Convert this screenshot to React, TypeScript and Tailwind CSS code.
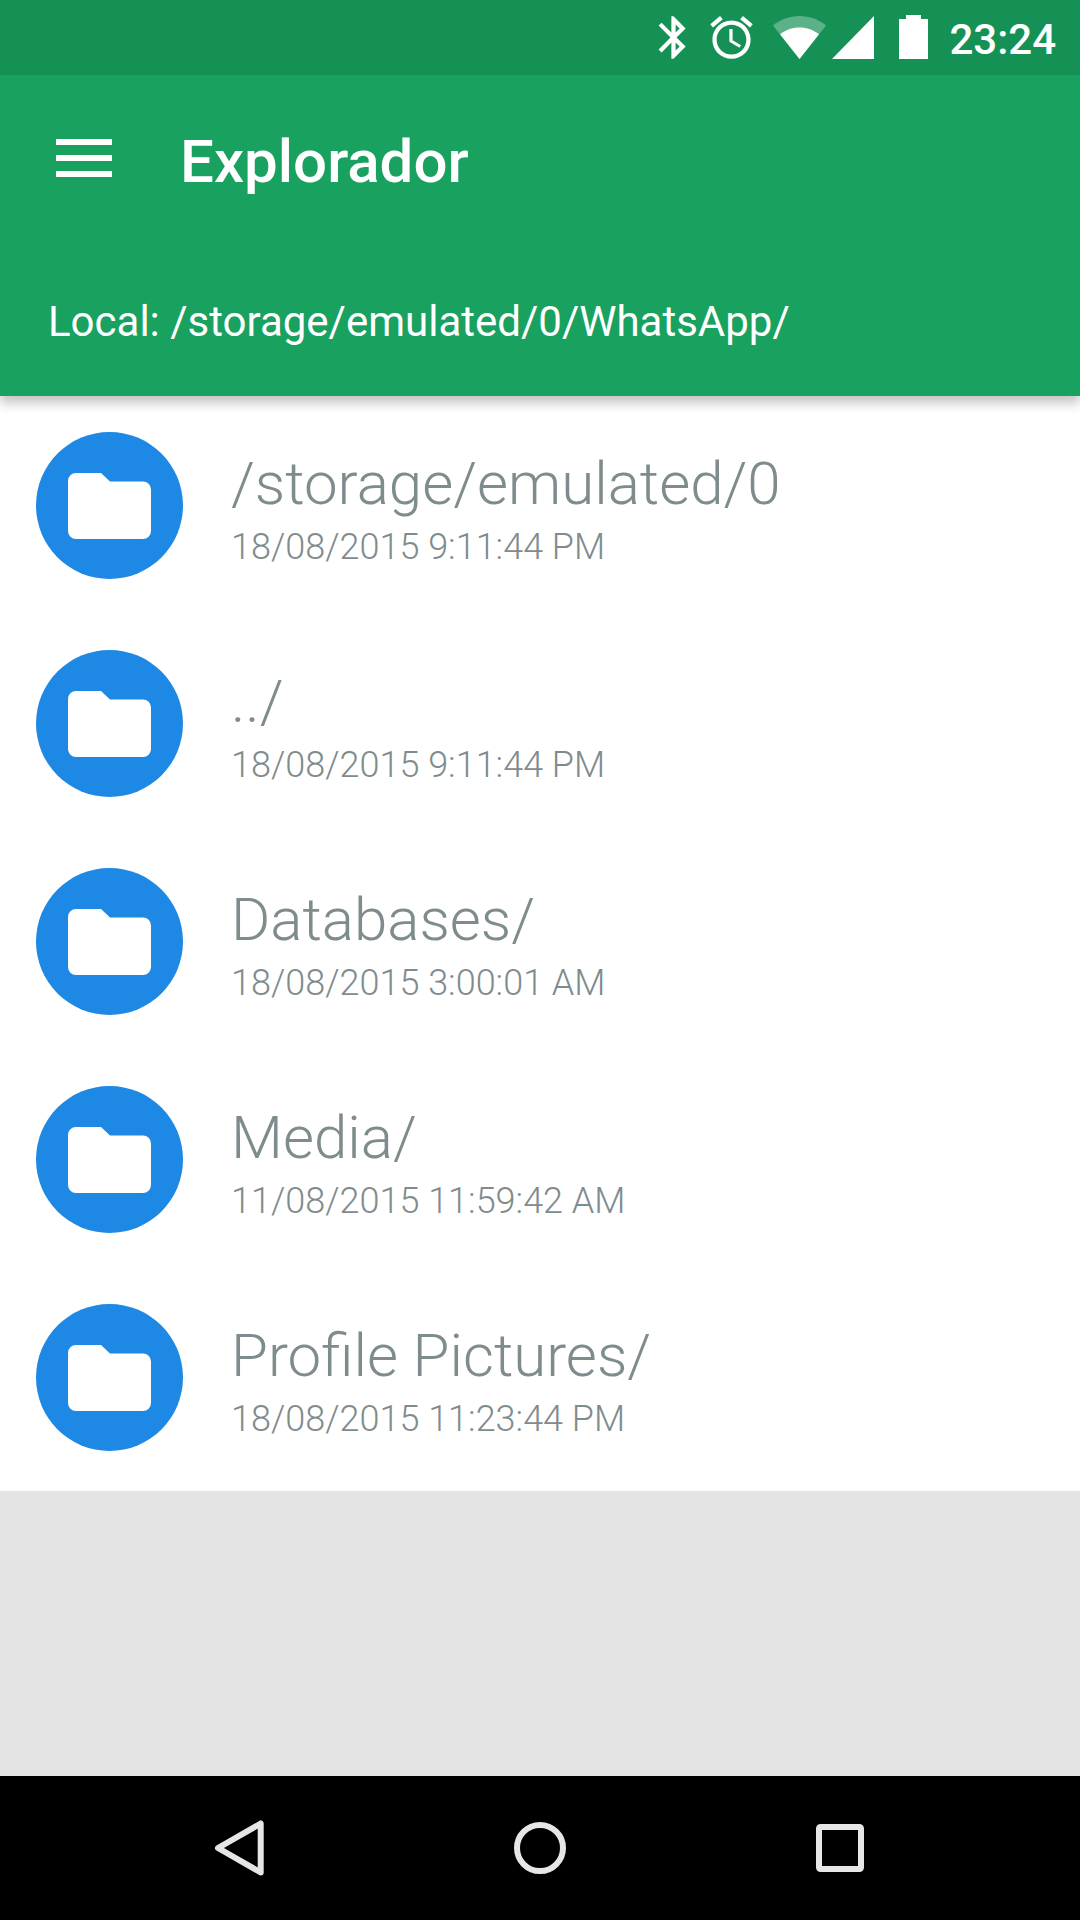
import React from 'react';

interface Entry {
  name: string;
  date: string;
}

const entries: Entry[] = [
  { name: '/storage/emulated/0', date: '18/08/2015 9:11:44 PM' },
  { name: '../', date: '18/08/2015 9:11:44 PM' },
  { name: 'Databases/', date: '18/08/2015 3:00:01 AM' },
  { name: 'Media/', date: '11/08/2015 11:59:42 AM' },
  { name: 'Profile Pictures/', date: '18/08/2015 11:23:44 PM' },
];

function StatusBar() {
  return (
    <div className="relative z-20 flex h-[75px] items-start justify-end bg-[#169155] pr-6 text-white">
      <svg className="mt-3 h-[51px] w-[51px]" viewBox="0 0 24 24" fill="currentColor">
        <path d="M17.71 7.71L12 2h-1v7.59L6.41 5 5 6.41 10.59 12 5 17.59 6.41 19 11 14.41V22h1l5.71-5.71-4.3-4.29 4.3-4.29zM13 5.83l1.88 1.88L13 9.59V5.83zm1.88 10.46L13 18.17v-3.76l1.88 1.88z" />
      </svg>
      <svg className="mt-3 ml-[7px] h-[51px] w-[51px]" viewBox="0 0 24 24" fill="currentColor">
        <path d="M22 5.72l-4.6-3.86-1.29 1.53 4.6 3.86L22 5.72zM7.88 3.39L6.6 1.86 2 5.71l1.29 1.53 4.59-3.85zM12.5 8H11v6l4.75 2.85.75-1.23-4-2.37V8zM12 4c-4.97 0-9 4.03-9 9s4.02 9 9 9c4.97 0 9-4.03 9-9s-4.03-9-9-9zm0 16c-3.87 0-7-3.13-7-7s3.13-7 7-7 7 3.13 7 7-3.13 7-7 7z" />
      </svg>
      <svg className="mt-4 ml-4 h-[43px] w-[53px]" viewBox="0 0 53 43" fill="currentColor">
        <path d="M0 9.5C7.500 3.500 16.500 0 26.500 0S45.500 3.500 53 9.500L26.500 43z" opacity=".3" />
        <path d="M7 18.300C12.500 14 19 11.500 26.500 11.500S40.500 14 46 18.300L26.500 43z" />
      </svg>
      <svg className="mt-4 ml-1.5 h-[43px] w-[42px]" viewBox="0 0 42 43" fill="currentColor">
        <path d="M42 0v43H0z" />
      </svg>
      <svg className="mt-[15px] ml-[25px] h-11 w-[29px]" viewBox="0 0 29 44" fill="currentColor">
        <path d="M7 0h15v4h7v40H0V4h7z" />
      </svg>
      <span className="mt-[15px] ml-[21px] text-[42px] leading-[50px] font-medium">23:24</span>
    </div>
  );
}

function Header() {
  return (
    <header className="relative z-10 h-[321px] bg-[#19a15f] text-white shadow-[0_7px_11px_rgba(0,0,0,0.24)]">
      <div className="flex h-[166px] items-center pl-14">
        <button className="flex flex-col gap-2.5" aria-label="Menu">
          <span className="h-1.5 w-14 bg-white" />
          <span className="h-1.5 w-14 bg-white" />
          <span className="h-1.5 w-14 bg-white" />
        </button>
        <h1 className="mt-[7px] ml-[68px] text-[60px] leading-[70px] font-medium">Explorador</h1>
      </div>
      <p className="mt-14 pl-12 text-[42px] leading-[50px]">Local: /storage/emulated/0/WhatsApp/</p>
    </header>
  );
}

function EntryRow({ entry }: { entry: Entry }) {
  return (
    <li className="flex h-[218px] pt-9 pl-9">
      <div className="flex h-[147px] w-[147px] items-center justify-center rounded-full bg-[#1e88e5]">
        <svg className="mt-px h-[66px] w-[83px]" viewBox="0 0 83 66" fill="white">
          <path d="M8 0H33L42 8.500H75a8 8 0 0 1 8 8V58a8 8 0 0 1-8 8H8a8 8 0 0 1-8-8V8a8 8 0 0 1 8-8z" />
        </svg>
      </div>
      <div className="ml-12 pt-[17px] font-light text-[#7f8c8d]">
        <div className="text-[60px] leading-[70px]">{entry.name}</div>
        <div className="mt-[7px] text-[36px] leading-[42px]">{entry.date}</div>
      </div>
    </li>
  );
}

function NavBar() {
  return (
    <nav className="flex h-36 items-center justify-between bg-black px-[205px]">
      <svg className="h-[70px] w-[70px]" viewBox="0 0 70 70" fill="none" stroke="#e6e6e6" strokeWidth="6" strokeLinejoin="round">
        <path d="M13 35L55.700 10.500V59.500z" />
      </svg>
      <svg className="h-[70px] w-[70px]" viewBox="0 0 70 70" fill="none" stroke="#e6e6e6" strokeWidth="6">
        <circle cx="35" cy="35" r="23" />
      </svg>
      <svg className="h-[70px] w-[70px]" viewBox="0 0 70 70" fill="none" stroke="#e6e6e6" strokeWidth="6">
        <rect x="14" y="14" width="42" height="42" rx="1.5" />
      </svg>
    </nav>
  );
}

export default function App() {
  return (
    <div className="flex h-[1920px] w-[1080px] flex-col overflow-hidden bg-[#e4e4e4] font-['Roboto',sans-serif]">
      <StatusBar />
      <Header />
      <ul className="bg-white pb-[5px]">
        {entries.map(entry => (
          <EntryRow key={entry.name} entry={entry} />
        ))}
      </ul>
      <div className="flex-1" />
      <NavBar />
    </div>
  );
}
